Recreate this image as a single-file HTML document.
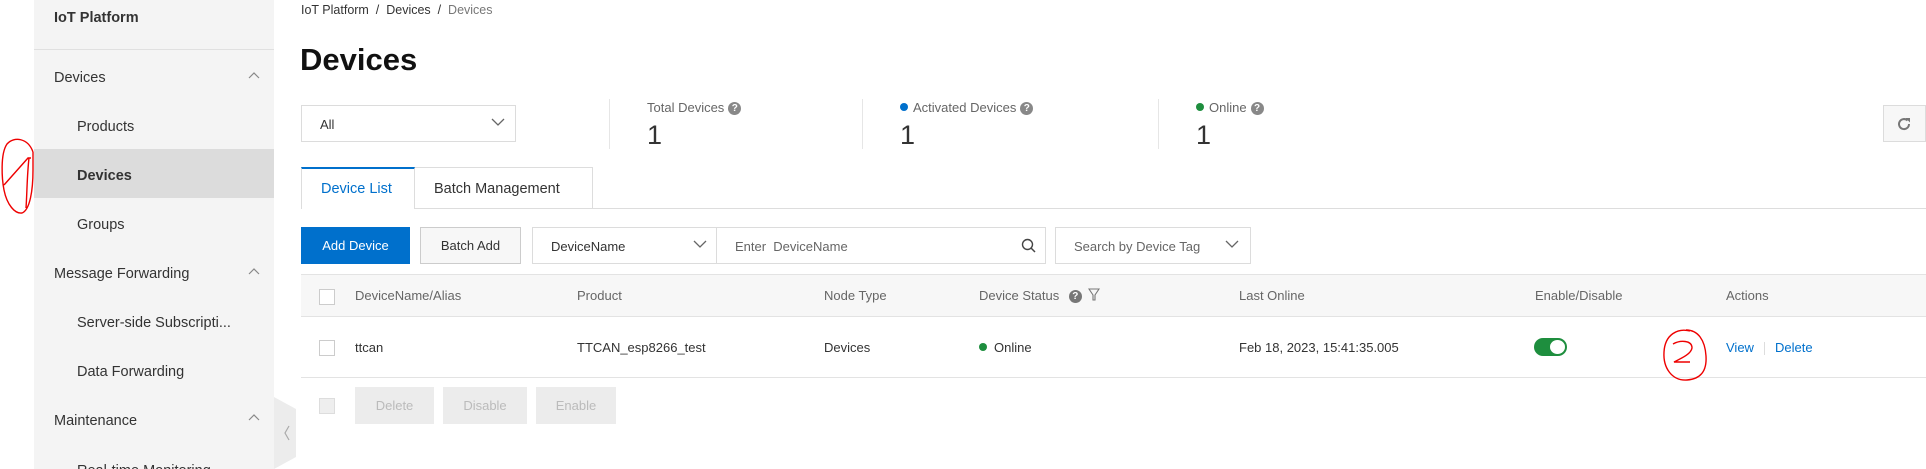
<!DOCTYPE html>
<html><head><meta charset="utf-8"><style>
*{box-sizing:border-box;margin:0;padding:0}
html,body{width:1926px;height:469px;overflow:hidden;background:#fff}
body{font-family:"Liberation Sans",sans-serif;color:#333;font-size:13px}
#w{position:relative;width:1926px;height:469px;overflow:hidden}
.a{position:absolute;white-space:nowrap}
.sb{position:absolute;left:34px;top:0;width:240px;height:469px;background:#f4f4f4}
.si{position:absolute;font-size:14.5px;color:#333;line-height:20px;white-space:nowrap}
.chev{position:absolute;left:248px;width:12px;height:8px}
.box{position:absolute;border:1px solid #dcdcdc;background:#fff}
.btn{position:absolute;display:flex;align-items:center;justify-content:center;font-size:13px}
.cb{position:absolute;width:16px;height:16px;border:1px solid #ccc;background:#fff}
.th{position:absolute;top:288px;color:#666;font-size:13px;line-height:16px;white-space:nowrap}
.td{position:absolute;top:340px;color:#333;font-size:13px;line-height:16px;white-space:nowrap}
.q{display:inline-block;width:13px;height:13px;border-radius:50%;background:#888;color:#fff;font-size:10px;font-weight:bold;text-align:center;line-height:13px;vertical-align:1px;margin-left:4px}
</style></head><body><div id="w">
<div class="sb"></div>
<div style="position:absolute;left:34px;top:49px;width:240px;height:1px;background:#e0e0e0"></div>
<div style="position:absolute;left:34px;top:149px;width:240px;height:49px;background:#dcdcdc"></div>
<div class="si" style="left:54px;top:8px;font-weight:600">IoT Platform</div>
<div class="si" style="left:54px;top:68px">Devices</div>
<div class="si" style="left:77px;top:117px">Products</div>
<div class="si" style="left:77px;top:166px;font-weight:bold">Devices</div>
<div class="si" style="left:77px;top:215px">Groups</div>
<div class="si" style="left:54px;top:264px">Message Forwarding</div>
<div class="si" style="left:77px;top:313px">Server-side Subscripti...</div>
<div class="si" style="left:77px;top:362px">Data Forwarding</div>
<div class="si" style="left:54px;top:411px">Maintenance</div>
<div class="si" style="left:77px;top:461px">Real-time Monitoring</div>
<svg class="chev" style="top:71px" viewBox="0 0 12 8"><path d="M1 7L6 2L11 7" fill="none" stroke="#888" stroke-width="1.2"/></svg>
<svg class="chev" style="top:267px" viewBox="0 0 12 8"><path d="M1 7L6 2L11 7" fill="none" stroke="#888" stroke-width="1.2"/></svg>
<svg class="chev" style="top:413px" viewBox="0 0 12 8"><path d="M1 7L6 2L11 7" fill="none" stroke="#888" stroke-width="1.2"/></svg>
<svg class="a" style="left:274px;top:397px" width="22" height="72" viewBox="0 0 22 72"><path d="M0 0L22 12V60L0 72Z" fill="#ececec"/><path d="M15 29L11 36L15 43" fill="none" stroke="#aaa" stroke-width="1.2"/></svg>

<div class="a" style="left:301px;top:3px;font-size:12.5px;color:#333">IoT Platform &nbsp;/&nbsp; Devices &nbsp;/&nbsp; <span style="color:#777">Devices</span></div>
<div class="a" style="left:300px;top:42px;font-size:31px;font-weight:bold;color:#111">Devices</div>

<div class="box" style="left:301px;top:105px;width:215px;height:37px"></div>
<div class="a" style="left:320px;top:117px;font-size:13px">All</div>
<svg class="a" style="left:491px;top:118px" width="14" height="9"><path d="M1 1L7 7L13 1" fill="none" stroke="#666" stroke-width="1.3"/></svg>
<div class="a" style="left:609px;top:99px;width:1px;height:50px;background:#e6e6e6"></div>
<div class="a" style="left:862px;top:99px;width:1px;height:50px;background:#e6e6e6"></div>
<div class="a" style="left:1158px;top:99px;width:1px;height:50px;background:#e6e6e6"></div>
<div class="a" style="left:647px;top:100px;color:#666;font-size:13px">Total Devices<span class="q">?</span></div>
<div class="a" style="left:647px;top:120px;font-size:27px;color:#333">1</div>
<div class="a" style="left:900px;top:100px;color:#666;font-size:13px"><span style="display:inline-block;width:8px;height:8px;border-radius:50%;background:#0070cc;margin-right:5px;vertical-align:1px"></span>Activated Devices<span class="q">?</span></div>
<div class="a" style="left:900px;top:120px;font-size:27px;color:#333">1</div>
<div class="a" style="left:1196px;top:100px;color:#666;font-size:13px"><span style="display:inline-block;width:8px;height:8px;border-radius:50%;background:#1e8e3e;margin-right:5px;vertical-align:1px"></span>Online<span class="q">?</span></div>
<div class="a" style="left:1196px;top:120px;font-size:27px;color:#333">1</div>
<div class="box" style="left:1883px;top:105px;width:43px;height:37px;background:#f7f7f7"></div>
<svg class="a" style="left:1895px;top:115px" width="18" height="18" viewBox="0 0 18 18"><path d="M14 9A5 5 0 1 1 12.5 5.5" fill="none" stroke="#777" stroke-width="2"/><path d="M10.5 3H15V7.5Z" fill="#777"/></svg>

<div class="a" style="left:301px;top:208px;width:1625px;height:1px;background:#ddd"></div>
<div class="a" style="left:301px;top:167px;width:114px;height:42px;background:#fff;border:1px solid #ddd;border-top:2px solid #0070cc;border-bottom:none"></div>
<div class="a" style="left:321px;top:181px;color:#0070cc;font-size:14.5px">Device List</div>
<div class="a" style="left:415px;top:167px;width:178px;height:41px;border:1px solid #ddd;border-left:none;border-bottom:none"></div>
<div class="a" style="left:434px;top:181px;color:#333;font-size:14.5px">Batch Management</div>

<div class="btn" style="left:301px;top:227px;width:109px;height:37px;background:#0070cc;color:#fff">Add Device</div>
<div class="btn" style="left:420px;top:227px;width:101px;height:37px;background:#f7f7f7;border:1px solid #ccc">Batch Add</div>
<div class="box" style="left:532px;top:227px;width:185px;height:37px"></div>
<div class="a" style="left:551px;top:239px">DeviceName</div>
<svg class="a" style="left:693px;top:240px" width="14" height="9"><path d="M1 1L7 7L13 1" fill="none" stroke="#666" stroke-width="1.3"/></svg>
<div class="box" style="left:716px;top:227px;width:330px;height:37px"></div>
<div class="a" style="left:735px;top:239px;color:#666">Enter&nbsp; DeviceName</div>
<svg class="a" style="left:1021px;top:238px" width="15" height="15" viewBox="0 0 15 15"><circle cx="6.5" cy="6.5" r="5" fill="none" stroke="#444" stroke-width="1.4"/><path d="M10 10L14 14" stroke="#444" stroke-width="1.5"/></svg>
<div class="box" style="left:1055px;top:227px;width:196px;height:37px"></div>
<div class="a" style="left:1074px;top:239px;color:#666">Search by Device Tag</div>
<svg class="a" style="left:1225px;top:240px" width="14" height="9"><path d="M1 1L7 7L13 1" fill="none" stroke="#666" stroke-width="1.3"/></svg>

<div class="a" style="left:301px;top:274px;width:1625px;height:43px;background:#f7f7f7;border-top:1px solid #e3e3e3;border-bottom:1px solid #e3e3e3"></div>
<div class="a" style="left:301px;top:377px;width:1625px;height:1px;background:#e3e3e3"></div>
<div class="cb" style="left:319px;top:289px"></div>
<div class="th" style="left:355px">DeviceName/Alias</div>
<div class="th" style="left:577px">Product</div>
<div class="th" style="left:824px">Node Type</div>
<div class="th" style="left:979px">Device Status <span class="q" style="margin-left:6px;background:#777">?</span>
<svg width="12" height="14" style="vertical-align:-2px;margin-left:3px" viewBox="0 0 12 14"><path d="M1 1H11L7 7V12H5V7Z" fill="none" stroke="#777" stroke-width="1.1"/></svg></div>
<div class="th" style="left:1239px">Last Online</div>
<div class="th" style="left:1535px">Enable/Disable</div>
<div class="th" style="left:1726px">Actions</div>

<div class="cb" style="left:319px;top:340px"></div>
<div class="td" style="left:355px">ttcan</div>
<div class="td" style="left:577px">TTCAN_esp8266_test</div>
<div class="td" style="left:824px">Devices</div>
<div class="td" style="left:979px"><span style="display:inline-block;width:8px;height:8px;border-radius:50%;background:#1e8e3e;margin-right:7px;vertical-align:1px"></span>Online</div>
<div class="td" style="left:1239px">Feb 18, 2023, 15:41:35.005</div>
<div class="a" style="left:1534px;top:338px;width:33px;height:18px;border-radius:9px;background:#1e8e3e"></div>
<div class="a" style="left:1550px;top:340px;width:15px;height:14px;border-radius:50%;background:#fff"></div>
<div class="td" style="left:1726px;color:#0070cc">View</div>
<div class="a" style="left:1764px;top:342px;width:1px;height:13px;background:#ddd"></div>
<div class="td" style="left:1775px;color:#0070cc">Delete</div>

<div class="cb" style="left:319px;top:398px;background:#eee;border-color:#ddd"></div>
<div class="btn" style="left:355px;top:387px;width:79px;height:37px;background:#ececec;color:#bbb">Delete</div>
<div class="btn" style="left:443px;top:387px;width:84px;height:37px;background:#ececec;color:#bbb">Disable</div>
<div class="btn" style="left:536px;top:387px;width:80px;height:37px;background:#ececec;color:#bbb">Enable</div>

<svg class="a" style="left:0;top:130px" width="50" height="90" viewBox="0 0 50 90"><path d="M33 22C28 8 14 6 7 14C0 24 2 50 4 60C7 75 15 84 22 83C30 80 33 60 33 40C33 32 33 26 33 22M31 28L28 28L4 55M29 28C27 45 27 65 26 78" fill="none" stroke="#e00" stroke-width="1.4"/></svg>
<svg class="a" style="left:1660px;top:326px" width="52" height="58" viewBox="0 0 52 58"><path d="M30 5C18 2 5 8 4 26C3 42 12 55 27 54C40 53 47 46 46 30C45 14 38 4 26 4M13 18C20 14 32 14 32 22C31 28 22 32 14 36H30" fill="none" stroke="#e00" stroke-width="1.4"/></svg>
</div></body></html>
